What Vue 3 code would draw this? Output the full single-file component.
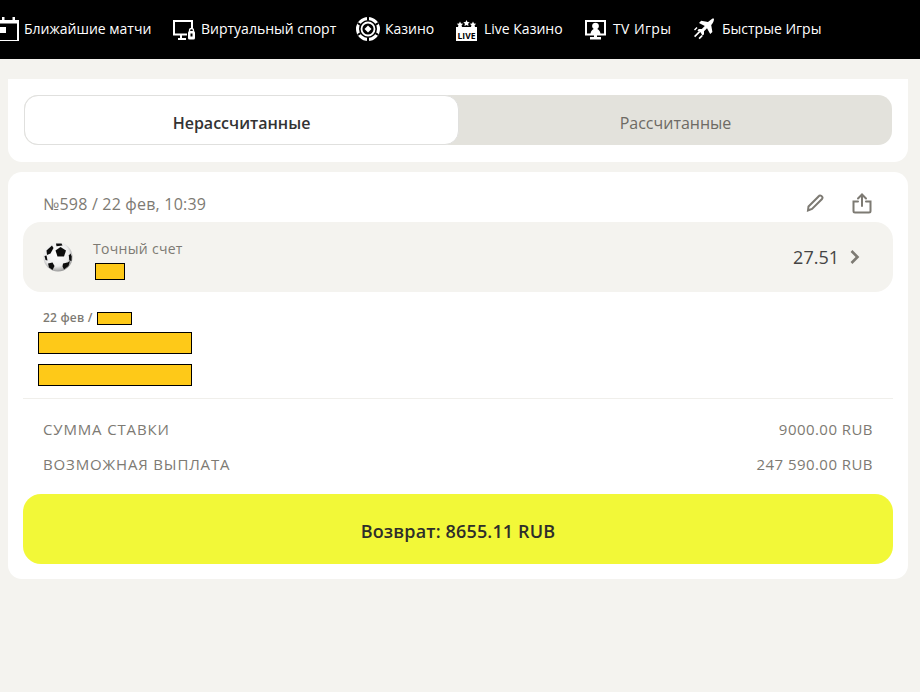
<script setup>
const nav = [
  { key: 'cal', label: 'Ближайшие матчи' },
  { key: 'virt', label: 'Виртуальный спорт' },
  { key: 'casino', label: 'Казино' },
  { key: 'live', label: 'Live Казино' },
  { key: 'tv', label: 'TV Игры' },
  { key: 'fast', label: 'Быстрые Игры' }
]
</script>

<template>
  <div class="page">
    <header class="nav">
      <a v-for="n in nav" :key="n.key" class="nav-item" :class="'i-' + n.key">
        <svg v-if="n.key === 'cal'" width="24" height="24" viewBox="0 0 24 24">
          <path fill="#fff" d="M6 0h2.500v3h8V0H19v3h4v22H0V3h6zM2 6.500V23h19V6.500z"/>
          <rect x="0" y="10" width="10" height="6" fill="#fff"/>
        </svg>
        <svg v-else-if="n.key === 'virt'" width="24" height="24" viewBox="0 0 24 24">
          <path fill="#fff" d="M0 3h20v8h-2V5H2v11.500h12v2H9V21h4v2H5v-2h2v-2.500H0z"/>
          <rect x="15" y="14" width="7" height="8.500" rx="1.500" fill="#fff"/>
          <circle cx="18.500" cy="13.500" r="2" fill="none" stroke="#fff" stroke-width="1.300"/>
          <rect x="17.500" y="16.500" width="2" height="3" fill="#000"/>
        </svg>
        <svg v-else-if="n.key === 'casino'" width="24" height="24" viewBox="0 0 24 24">
          <circle cx="12" cy="12" r="10.500" fill="none" stroke="#fff" stroke-width="3"/>
          <circle cx="12" cy="12" r="6.500" fill="none" stroke="#fff" stroke-width="1.800"/>
          <path fill="#fff" d="M12 8.500l3.500 3.500-3.500 3.500L8.500 12z"/>
          <path stroke="#000" stroke-width="2" d="M12 0v3.500M12 20.500v3.500M1.600 6l3 1.800M19.400 16.200l3 1.800M1.600 18l3-1.800M19.400 7.800l3-1.800"/>
        </svg>
        <svg v-else-if="n.key === 'live'" width="24" height="24" viewBox="0 0 24 24">
          <rect x="0" y="10" width="21" height="14" fill="#fff"/>
          <path fill="#fff" d="M4 4.500l1 2 2.200.3-1.600 1.500.4 1.700h-4l.4-1.700L.8 6.800 3 6.500zM10.500 3l1 2 2.200.3-1.600 1.500.4 2.200-2-1-2 1 .4-2.200-1.600-1.500L9.500 5zM17 4.500l1 2 2.200.3-1.600 1.500.4 1.700h-4l.4-1.700-1.600-1.500 2.200-.3z"/>
          <text x="10.500" y="22" text-anchor="middle" class="live-t">LIVE</text>
        </svg>
        <svg v-else-if="n.key === 'tv'" width="24" height="24" viewBox="0 0 24 24">
          <path fill="#fff" fill-rule="evenodd" d="M0 3h21v15.500h-9V20h4v2.500H5V20h4v-1.500H0zM2 5v11.500h3.500c.4-2.800 2-4 3.300-4.500a3.400 3.400 0 1 1 3.400 0c1.300.5 2.900 1.700 3.300 4.500H19V5z"/>
        </svg>
        <svg v-else width="24" height="24" viewBox="0 0 24 24">
          <g fill="#fff">
            <path d="M19.500 1.500c1.300-.3 1.700.1 1.400 1.400-.4 1.900-1.400 3.600-2.700 5.200l1.200 6.800-2.200 2.200-3.200-5.800-3 3v3l-1.500 1.400-1.800-3.300-3.300-1.800 1.400-1.500h3l3-3-5.800-3.200 2.200-2.200 6.800 1.200c1.400-1.300 2.900-2.300 4.500-3.400z"/>
            <path d="M1 12.500l2.500-2.500 1 1L2 13.500zM1 19l5-5 1.200 1.200-5 5zM5.500 21l3-3 1.200 1.200-3 3z"/>
          </g>
        </svg>
        <span>{{ n.label }}</span>
      </a>
    </header>

    <main class="content">
      <section class="card tabs-card">
        <div class="tabs">
          <button class="tab active">Нерассчитанные</button>
          <button class="tab">Рассчитанные</button>
        </div>
      </section>

      <section class="card bet">
        <div class="bet-head">
          <span class="bet-id">№598 / 22 фев, 10:39</span>
          <div class="actions">
            <svg width="20" height="20" viewBox="0 0 20 20">
              <path fill="none" stroke="#7d7a73" stroke-width="2" d="M3.500 12.500L13.500 2.500a1.800 1.800 0 0 1 3.500 2.500L7 15l-4 1.500z"/>
            </svg>
            <svg width="20" height="22" viewBox="0 0 20 22">
              <path fill="none" stroke="#7d7a73" stroke-width="2" stroke-linecap="round" d="M10 13V2M6 5.500L10 1.500l4 4M6 8.500H1.500v9.500A1.500 1.500 0 0 0 3 19.500h14a1.500 1.500 0 0 0 1.500-1.500V8.500H14"/>
            </svg>
          </div>
        </div>

        <div class="market">
          <svg class="ball" width="30" height="30" viewBox="0 0 30 30">
            <defs>
              <radialGradient id="b" cx="45%" cy="40%" r="60%">
                <stop offset="0" stop-color="#fff"/>
                <stop offset="0.7" stop-color="#eee"/>
                <stop offset="1" stop-color="#9a9a9a"/>
              </radialGradient>
              <filter id="s"><feGaussianBlur stdDeviation="0.7"/></filter>
            </defs>
            <circle cx="15" cy="15" r="14.500" fill="url(#b)"/>
            <g fill="#111" filter="url(#s)">
              <path d="M17.500 5l5.500 3.500-2 6h-6.500L12.500 8.500z"/>
              <path d="M3.500 8.500L9 3.500l1.500 2.500L7.500 11.500 4 13z"/>
              <path d="M1.500 14l2-.5 1 5-2-.5z"/>
              <path d="M5 21.500l4.500-1 2 3.500-2 4-3.500-2.500z"/>
              <path d="M20 21.500l4.500-1 2.500-1.500-1.500 5-4.500 3.500-1.500-3z"/>
              <path d="M13 1.500h5.500l1 2-6 .8z"/>
              <path d="M27.500 11.500l1.200 3-.2 4.500-2.200-.5-.5-5z"/>
            </g>
          </svg>
          <div class="market-info">
            <div class="market-name">Точный счет</div>
            <div class="mask m-score"></div>
          </div>
          <span class="odds">27.51</span>
          <svg class="chev" width="12" height="16" viewBox="0 0 12 16">
            <path fill="none" stroke="#7d7a73" stroke-width="2.600" d="M2.500 2l6 6-6 6"/>
          </svg>
        </div>

        <div class="event">
          <div class="event-date">22 фев / <span class="mask m-time"></span></div>
          <div class="mask m-team"></div>
          <div class="mask m-team"></div>
        </div>

        <div class="totals">
          <div class="row"><span class="lbl">СУММА СТАВКИ</span><span class="val">9000.00 RUB</span></div>
          <div class="row"><span class="lbl">ВОЗМОЖНАЯ ВЫПЛАТА</span><span class="val">247 590.00 RUB</span></div>
        </div>

        <button class="refund">Возврат: 8655.11 RUB</button>
      </section>
    </main>
  </div>
</template>

<style>
html, body { margin: 0; background: #f4f3ef; }
</style>

<style scoped>
.page {
  width: 920px;
  height: 692px;
  overflow: hidden;
  background: #f4f3ef;
  font-family: "Open Sans", "Noto Sans", sans-serif;
}
.nav {
  height: 59px;
  box-sizing: border-box;
  padding-bottom: 1px;
  background: #000;
  display: flex;
  align-items: center;
  white-space: nowrap;
  overflow: hidden;
}
.nav-item {
  display: flex;
  align-items: center;
  gap: 4px;
  color: #fff;
  font-size: 14px;
  flex: none;
}
.nav-item span { margin-bottom: 2px; }
.i-cal { margin-left: -4px; width: 177px; }
.i-virt { width: 183px; }
.i-casino { width: 100px; }
.i-live { width: 129px; }
.i-tv { width: 108px; }
.i-casino span, .i-fast span { margin-left: 1px; }
.i-tv span { letter-spacing: 0.4px; }
.content {
  padding: 20px 12px 0 8px;
  display: flex;
  flex-direction: column;
  gap: 10px;
}
.card { background: #fff; }
.tabs-card {
  height: 83px;
  box-sizing: border-box;
  padding: 16px 16px 17px;
  border-radius: 0 0 14px 14px;
}
.tabs {
  display: flex;
  height: 50px;
  background: #e3e2dc;
  border-radius: 14px;
}
.tab {
  flex: 1;
  height: 50px;
  border: 0;
  background: transparent;
  font: 400 16px "Open Sans", "Noto Sans", sans-serif;
  color: #6d6a64;
  padding: 6px 0 0;
}
.tab.active {
  background: #fff;
  border: 1px solid #e0e0de;
  border-radius: 14px;
  color: #333;
  font-weight: 600;
}
.bet {
  height: 407px;
  box-sizing: border-box;
  border-radius: 14px;
  padding: 15px;
  display: flex;
  flex-direction: column;
}
.bet-head {
  height: 35px;
  display: flex;
  justify-content: space-between;
  align-items: center;
  padding: 0 20px;
}
.bet-id { font-size: 16px; letter-spacing: 0.2px; color: #7d7a73; margin-top: -1px; }
.actions { display: flex; gap: 27px; align-items: center; margin-top: -2px; margin-right: 1px; }
.market {
  height: 70px;
  background: #f4f3ef;
  border-radius: 18px;
  display: flex;
  align-items: center;
  padding: 0 32px 0 20px;
}
.ball { flex: none; margin-top: -1px; }
.market-info { margin-left: 20px; flex: 1; }
.market-name { font-size: 14px; letter-spacing: 0.3px; color: #7d7a73; line-height: 20px; margin-top: 4px; }
.mask {
  background: #fec918;
  border: 1px solid #000;
  box-sizing: border-box;
}
.m-score { width: 30px; height: 17px; margin: 4px 0 0 2px; }
.odds { font-size: 18px; color: #444; margin-right: 10px; }
.event { padding: 19px 0 0 15px; display: flex; flex-direction: column; }
.event-date {
  font-size: 12px;
  letter-spacing: 0.2px;
  font-weight: 600;
  color: #7d7a73;
  height: 14px;
  line-height: 14px;
  display: flex;
  gap: 3px;
  align-items: center;
  padding-left: 5px;
}
.m-time { display: inline-block; width: 35px; height: 13px; margin-left: 1px; }
.m-team { width: 154px; height: 22px; margin-top: 10px; }
.event-date + .m-team { margin-top: 7px; }
.totals {
  margin-top: 12px;
  border-top: 1px solid #f0efeb;
  padding: 18px 20px 0;
  display: flex;
  flex-direction: column;
  gap: 11px;
}
.row {
  display: flex;
  justify-content: space-between;
  font-size: 15px;
  line-height: 24px;
  color: #7d7a73;
}
.lbl { letter-spacing: 0.85px; }
.val { letter-spacing: 0.45px; }
.refund {
  margin-top: 18px;
  height: 70px;
  border: 0;
  padding: 4px 0 0;
  border-radius: 18px;
  background: #f2f838;
  color: #2e2e2a;
  font: 600 18px "Open Sans", "Noto Sans", sans-serif;
  letter-spacing: 0.15px;
}
.live-t {
  font: 700 8.500px "Open Sans", sans-serif;
  fill: #000;
}
</style>
